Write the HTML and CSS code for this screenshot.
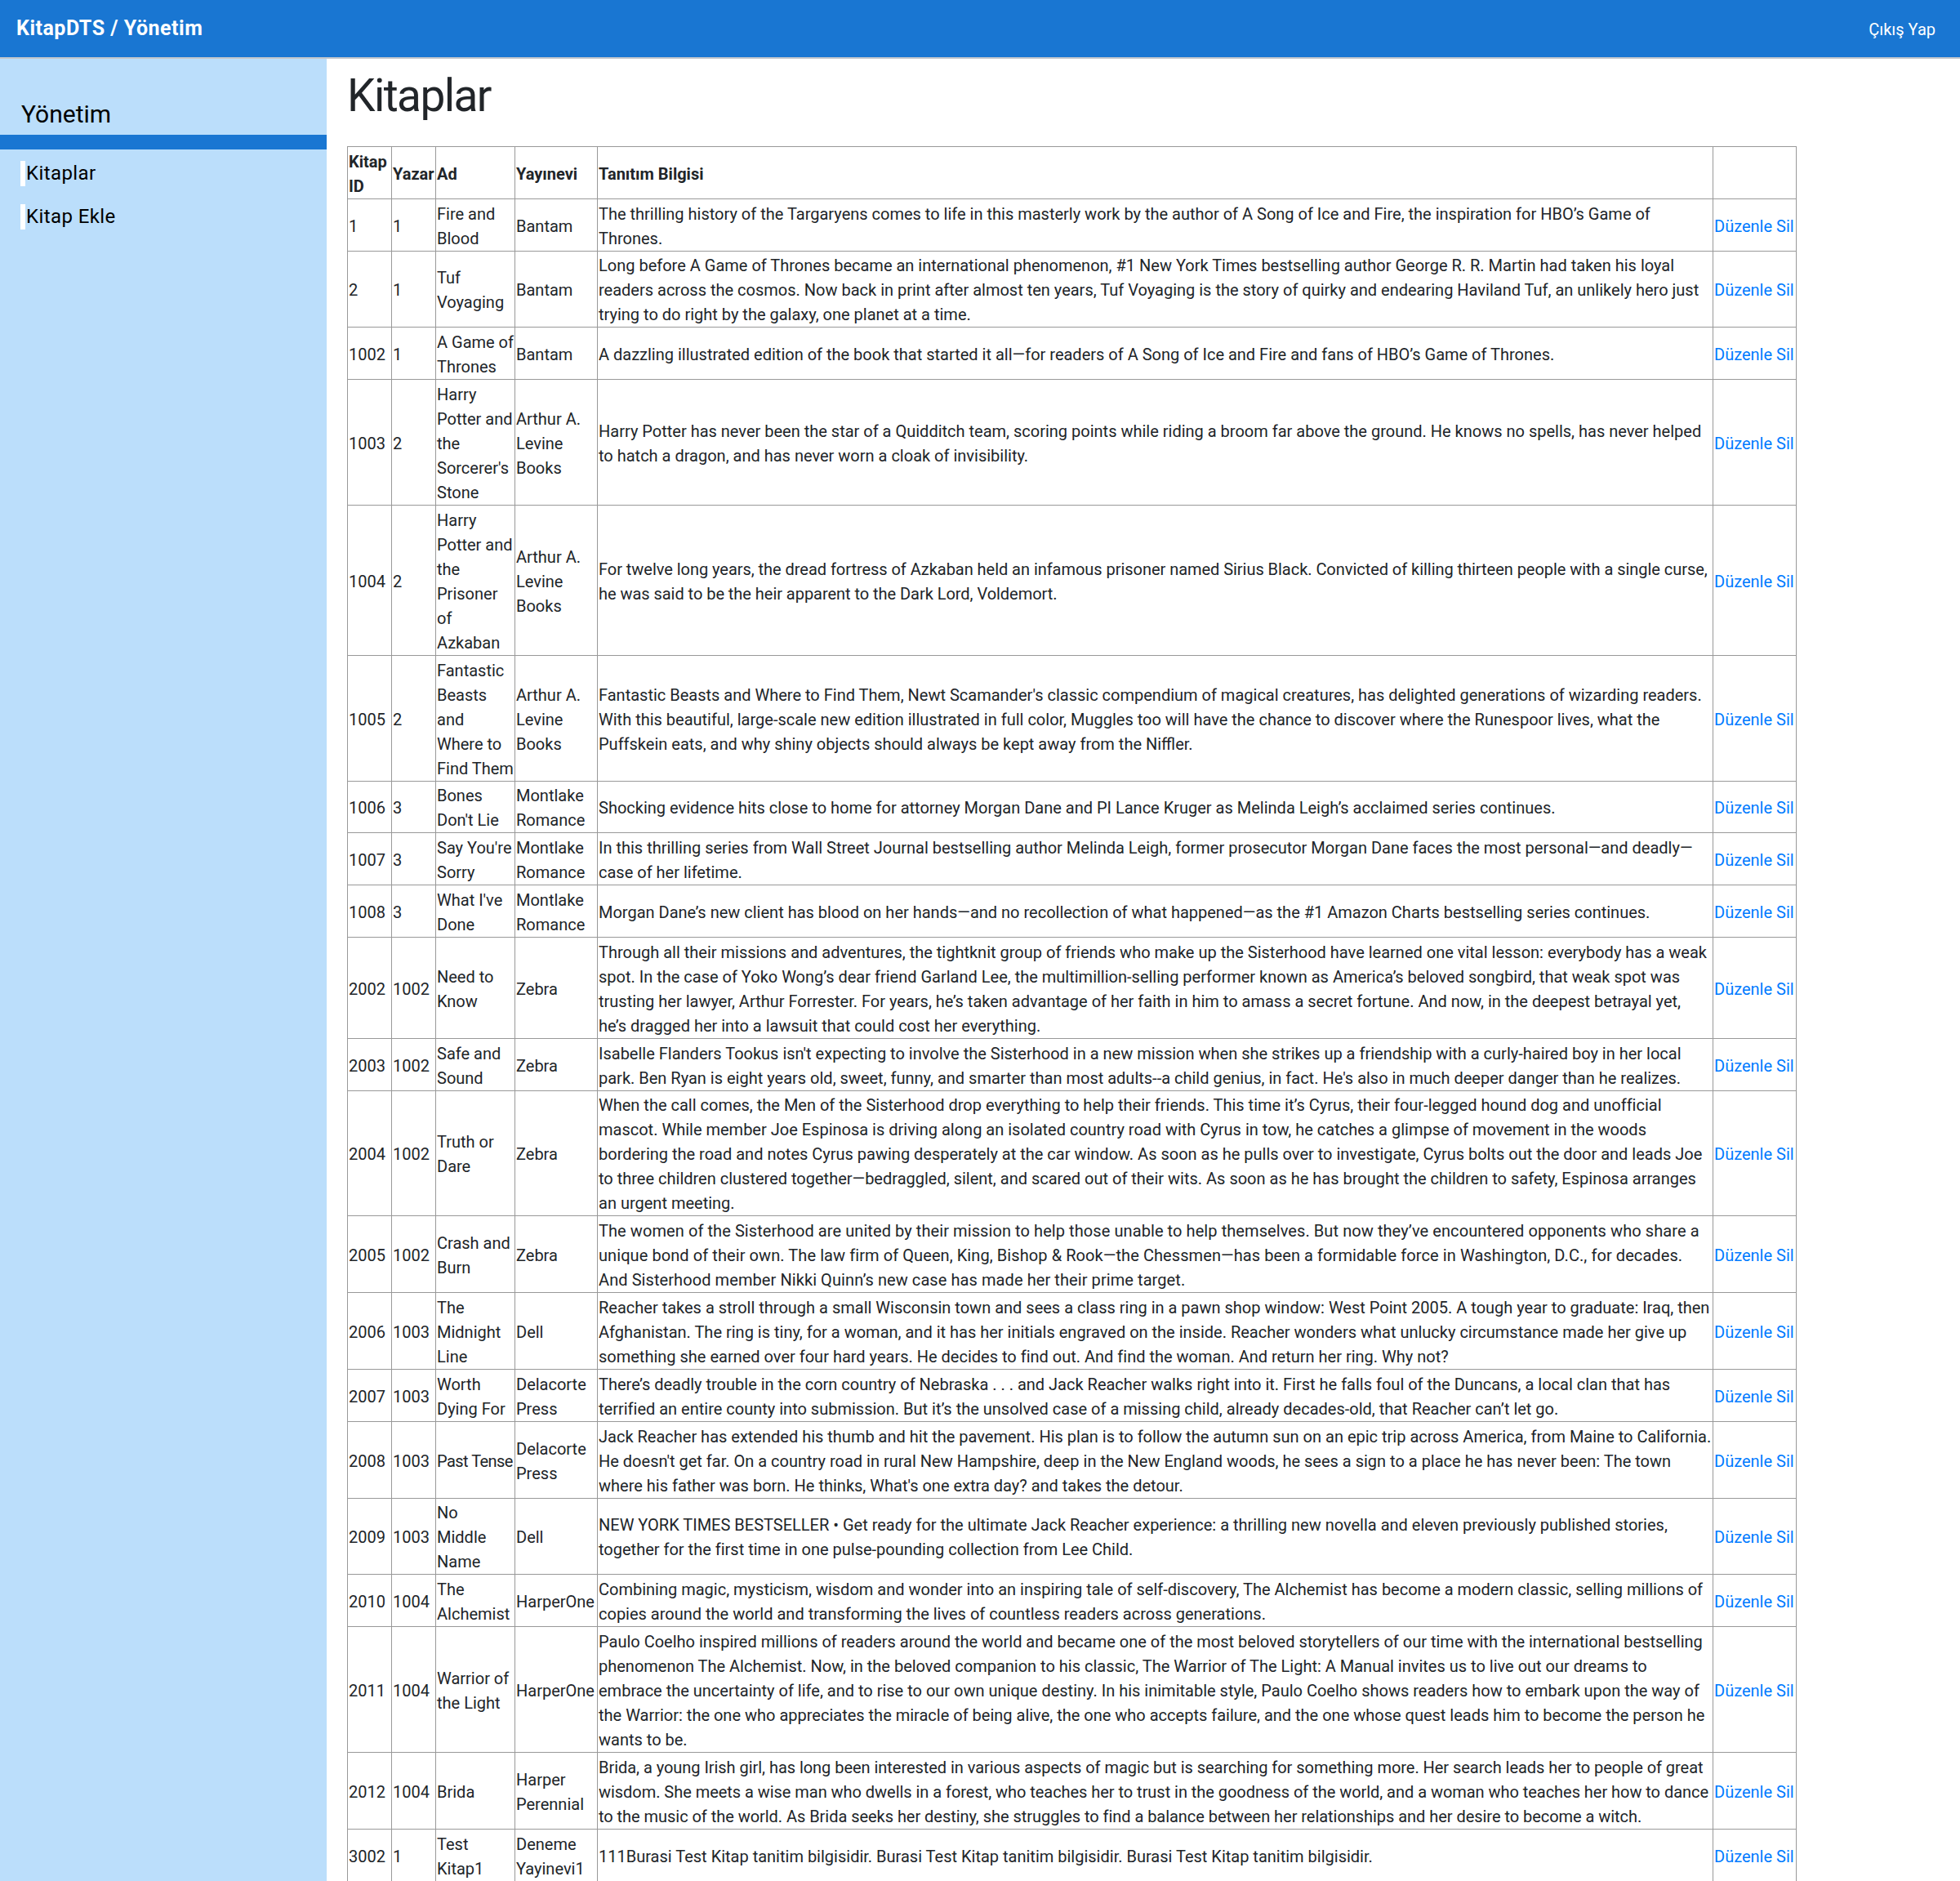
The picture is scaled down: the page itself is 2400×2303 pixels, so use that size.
FILE: index.html
```html
<!DOCTYPE html>
<html lang="tr">
<head>
<meta charset="utf-8">
<title>KitapDTS / Yönetim</title>
<link rel="stylesheet" href="styles.css">
</head>
<body>
<header class="topbar">
  <a class="brand" href="#">KitapDTS / Yönetim</a>
  <a class="logout" href="#">Çıkış Yap</a>
</header>
<div class="layout">
  <aside class="sidebar">
    <h4 class="side-title">Yönetim</h4>
    <div class="side-rule"></div>
    <ul class="side-nav">
      <li><a href="#">Kitaplar</a></li>
      <li><a href="#">Kitap Ekle</a></li>
    </ul>
  </aside>
  <main class="content">
    <h1 class="page-title">Kitaplar</h1>
    <table class="books">
      <colgroup>
        <col class="c-id"><col class="c-author"><col class="c-name"><col class="c-pub"><col class="c-desc"><col class="c-act">
      </colgroup>
      <thead>
        <tr><th>Kitap ID</th><th>Yazar</th><th>Ad</th><th>Yayınevi</th><th>Tanıtım Bilgisi</th><th></th></tr>
      </thead>
      <tbody>
        <tr><td>1</td><td>1</td><td>Fire and Blood</td><td>Bantam</td><td>The thrilling history of the Targaryens comes to life in this masterly work by the author of A Song of Ice and Fire, the inspiration for HBO’s Game of Thrones.</td><td><a href="#">Düzenle</a> <a href="#">Sil</a></td></tr>
        <tr><td>2</td><td>1</td><td>Tuf Voyaging</td><td>Bantam</td><td>Long before A Game of Thrones became an international phenomenon, #1 New York Times bestselling author George R. R. Martin had taken his loyal readers across the cosmos. Now back in print after almost ten years, Tuf Voyaging is the story of quirky and endearing Haviland Tuf, an unlikely hero just trying to do right by the galaxy, one planet at a time.</td><td><a href="#">Düzenle</a> <a href="#">Sil</a></td></tr>
        <tr><td>1002</td><td>1</td><td>A Game of Thrones</td><td>Bantam</td><td>A dazzling illustrated edition of the book that started it all—for readers of A Song of Ice and Fire and fans of HBO’s Game of Thrones.</td><td><a href="#">Düzenle</a> <a href="#">Sil</a></td></tr>
        <tr><td>1003</td><td>2</td><td>Harry Potter and the Sorcerer's Stone</td><td>Arthur A. Levine Books</td><td>Harry Potter has never been the star of a Quidditch team, scoring points while riding a broom far above the ground. He knows no spells, has never helped to hatch a dragon, and has never worn a cloak of invisibility.</td><td><a href="#">Düzenle</a> <a href="#">Sil</a></td></tr>
        <tr><td>1004</td><td>2</td><td>Harry Potter and the Prisoner of Azkaban</td><td>Arthur A. Levine Books</td><td class="tight">For twelve long years, the dread fortress of Azkaban held an infamous prisoner named Sirius Black. Convicted of killing thirteen people with a single curse, he was said to be the heir apparent to the Dark Lord, Voldemort.</td><td><a href="#">Düzenle</a> <a href="#">Sil</a></td></tr>
        <tr><td>1005</td><td>2</td><td>Fantastic Beasts and Where to Find Them</td><td>Arthur A. Levine Books</td><td>Fantastic Beasts and Where to Find Them, Newt Scamander's classic compendium of magical creatures, has delighted generations of wizarding readers. With this beautiful, large-scale new edition illustrated in full color, Muggles too will have the chance to discover where the Runespoor lives, what the Puffskein eats, and why shiny objects should always be kept away from the Niffler.</td><td><a href="#">Düzenle</a> <a href="#">Sil</a></td></tr>
        <tr><td>1006</td><td>3</td><td>Bones Don't Lie</td><td>Montlake Romance</td><td>Shocking evidence hits close to home for attorney Morgan Dane and PI Lance Kruger as Melinda Leigh’s acclaimed series continues.</td><td><a href="#">Düzenle</a> <a href="#">Sil</a></td></tr>
        <tr><td>1007</td><td>3</td><td>Say You're Sorry</td><td>Montlake Romance</td><td>In this thrilling series from Wall Street Journal bestselling author Melinda Leigh, former prosecutor Morgan Dane faces the most personal—and deadly—case of her lifetime.</td><td><a href="#">Düzenle</a> <a href="#">Sil</a></td></tr>
        <tr><td>1008</td><td>3</td><td>What I've Done</td><td>Montlake Romance</td><td>Morgan Dane’s new client has blood on her hands—and no recollection of what happened—as the #1 Amazon Charts bestselling series continues.</td><td><a href="#">Düzenle</a> <a href="#">Sil</a></td></tr>
        <tr><td>2002</td><td>1002</td><td>Need to Know</td><td>Zebra</td><td>Through all their missions and adventures, the tightknit group of friends who make up the Sisterhood have learned one vital lesson: everybody has a weak spot. In the case of Yoko Wong’s dear friend Garland Lee, the multimillion-selling performer known as America’s beloved songbird, that weak spot was trusting her lawyer, Arthur Forrester. For years, he’s taken advantage of her faith in him to amass a secret fortune. And now, in the deepest betrayal yet, he’s dragged her into a lawsuit that could cost her everything.</td><td><a href="#">Düzenle</a> <a href="#">Sil</a></td></tr>
        <tr><td>2003</td><td>1002</td><td>Safe and Sound</td><td>Zebra</td><td>Isabelle Flanders Tookus isn't expecting to involve the Sisterhood in a new mission when she strikes up a friendship with a curly-haired boy in her local park. Ben Ryan is eight years old, sweet, funny, and smarter than most adults--a child genius, in fact. He's also in much deeper danger than he realizes.</td><td><a href="#">Düzenle</a> <a href="#">Sil</a></td></tr>
        <tr><td>2004</td><td>1002</td><td>Truth or Dare</td><td>Zebra</td><td>When the call comes, the Men of the Sisterhood drop everything to help their friends. This time it’s Cyrus, their four-legged hound dog and unofficial mascot. While member Joe Espinosa is driving along an isolated country road with Cyrus in tow, he catches a glimpse of movement in the woods bordering the road and notes Cyrus pawing desperately at the car window. As soon as he pulls over to investigate, Cyrus bolts out the door and leads Joe to three children clustered together—bedraggled, silent, and scared out of their wits. As soon as he has brought the children to safety, Espinosa arranges an urgent meeting.</td><td><a href="#">Düzenle</a> <a href="#">Sil</a></td></tr>
        <tr><td>2005</td><td>1002</td><td>Crash and Burn</td><td>Zebra</td><td class="loose">The women of the Sisterhood are united by their mission to help those unable to help themselves. But now they’ve encountered opponents who share a unique bond of their own. The law firm of Queen, King, Bishop &amp; Rook—the Chessmen—has been a formidable force in Washington, D.C., for decades. And Sisterhood member Nikki Quinn’s new case has made her their prime target.</td><td><a href="#">Düzenle</a> <a href="#">Sil</a></td></tr>
        <tr><td>2006</td><td>1003</td><td>The Midnight Line</td><td>Dell</td><td>Reacher takes a stroll through a small Wisconsin town and sees a class ring in a pawn shop window: West Point 2005. A tough year to graduate: Iraq, then Afghanistan. The ring is tiny, for a woman, and it has her initials engraved on the inside. Reacher wonders what unlucky circumstance made her give up something she earned over four hard years. He decides to find out. And find the woman. And return her ring. Why not?</td><td><a href="#">Düzenle</a> <a href="#">Sil</a></td></tr>
        <tr><td>2007</td><td>1003</td><td>Worth Dying For</td><td>Delacorte Press</td><td>There’s deadly trouble in the corn country of Nebraska . . . and Jack Reacher walks right into it. First he falls foul of the Duncans, a local clan that has terrified an entire county into submission. But it’s the unsolved case of a missing child, already decades-old, that Reacher can’t let go.</td><td><a href="#">Düzenle</a> <a href="#">Sil</a></td></tr>
        <tr><td>2008</td><td>1003</td><td class="squeeze">Past&nbsp;Tense</td><td>Delacorte Press</td><td>Jack Reacher has extended his thumb and hit the pavement. His plan is to follow the autumn sun on an epic trip across America, from Maine to California. He doesn't get far. On a country road in rural New Hampshire, deep in the New England woods, he sees a sign to a place he has never been: The town where his father was born. He thinks, What's one extra day? and takes the detour.</td><td><a href="#">Düzenle</a> <a href="#">Sil</a></td></tr>
        <tr><td>2009</td><td>1003</td><td>No<br>Middle Name</td><td>Dell</td><td>NEW YORK TIMES BESTSELLER • Get ready for the ultimate Jack Reacher experience: a thrilling new novella and eleven previously published stories, together for the first time in one pulse-pounding collection from Lee Child.</td><td><a href="#">Düzenle</a> <a href="#">Sil</a></td></tr>
        <tr><td>2010</td><td>1004</td><td>The Alchemist</td><td>HarperOne</td><td>Combining magic, mysticism, wisdom and wonder into an inspiring tale of self-discovery, The Alchemist has become a modern classic, selling millions of copies around the world and transforming the lives of countless readers across generations.</td><td><a href="#">Düzenle</a> <a href="#">Sil</a></td></tr>
        <tr><td>2011</td><td>1004</td><td>Warrior of the Light</td><td>HarperOne</td><td>Paulo Coelho inspired millions of readers around the world and became one of the most beloved storytellers of our time with the international bestselling phenomenon The Alchemist. Now, in the beloved companion to his classic, The Warrior of The Light: A Manual invites us to live out our dreams to embrace the uncertainty of life, and to rise to our own unique destiny. In his inimitable style, Paulo Coelho shows readers how to embark upon the way of the Warrior: the one who appreciates the miracle of being alive, the one who accepts failure, and the one whose quest leads him to become the person he wants to be.</td><td><a href="#">Düzenle</a> <a href="#">Sil</a></td></tr>
        <tr><td>2012</td><td>1004</td><td>Brida</td><td>Harper Perennial</td><td class="tight">Brida, a young Irish girl, has long been interested in various aspects of magic but is searching for something more. Her search leads her to people of great wisdom. She meets a wise man who dwells in a forest, who teaches her to trust in the goodness of the world, and a woman who teaches her how to dance to the music of the world. As Brida seeks her destiny, she struggles to find a balance between her relationships and her desire to become a witch.</td><td><a href="#">Düzenle</a> <a href="#">Sil</a></td></tr>
        <tr><td>3002</td><td>1</td><td>Test Kitap1</td><td>Deneme Yayinevi1</td><td>111Burasi Test Kitap tanitim bilgisidir. Burasi Test Kitap tanitim bilgisidir. Burasi Test Kitap tanitim bilgisidir.</td><td><a href="#">Düzenle</a> <a href="#">Sil</a></td></tr>
      </tbody>
    </table>
  </main>
</div>
</body>
</html>
```
FILE: styles.css
```css
html, body {
  margin: 0;
  padding: 0;
}
body {
  font-family: Roboto, "Liberation Sans", sans-serif;
  font-size: 20px;
  line-height: 30px;
  color: #212529;
  background: #fff;
}
a {
  text-decoration: none;
}

/* top bar */
.topbar {
  height: 70px;
  box-sizing: content-box;
  background: #1976d2;
  border-bottom: 2px solid #c3c7cc;
  display: flex;
  align-items: center;
  justify-content: space-between;
  padding: 0 30px 0 20px;
}
.brand {
  color: #fff;
  font-weight: 700;
  font-size: 25px;
  line-height: 30px;
  letter-spacing: 0.5px;
}
.logout {
  color: #fff;
  font-size: 20px;
  line-height: 30px;
  padding-top: 2px;
}

/* layout */
.layout {
  display: flex;
  align-items: stretch;
}
.sidebar {
  flex: 0 0 400px;
  width: 400px;
  background: #bbdefb;
  padding-top: 50px;
  color: #000;
}
.side-title {
  margin: 0 0 7px;
  padding-left: 26px;
  font-size: 30px;
  line-height: 36px;
  font-weight: 400;
}
.side-rule {
  height: 18px;
  background: #1976d2;
}
.side-nav {
  list-style: none;
  margin: 14px 0 0;
  padding: 0 0 0 25px;
}
.side-nav li {
  margin-bottom: 22px;
}
.side-nav a {
  display: inline-block;
  border-left: 6px solid #fff;
  padding-left: 1px;
  color: #000;
  font-size: 24px;
  line-height: 31px;
  letter-spacing: 0.4px;
}

/* main */
.content {
  flex: 1;
  padding: 12px 0 0 25px;
}
.page-title {
  margin: 0 0 29px;
  font-size: 55px;
  line-height: 66px;
  font-weight: 400;
  letter-spacing: -1.6px;
  color: #212529;
}

/* table */
.books {
  border-collapse: collapse;
  table-layout: fixed;
  width: 1774px;
  border: 1px solid #999;
}
.c-id { width: 54px; }
.c-author { width: 54px; }
.c-name { width: 97px; }
.c-pub { width: 101px; }
.c-desc { width: 1366px; }
.c-act { width: 102px; }
.books th,
.books td {
  border: 1px solid #999;
  padding: 2.8px 1px 0;
  line-height: 30px;
  vertical-align: middle;
  text-align: left;
}
.books th {
  font-weight: 700;
}
.books td a {
  color: #007bff;
}
.books td.tight {
  letter-spacing: -0.04px;
}
.books td.loose {
  letter-spacing: 0.08px;
}
.books td.squeeze {
  white-space: nowrap;
  letter-spacing: -0.6px;
}
```
